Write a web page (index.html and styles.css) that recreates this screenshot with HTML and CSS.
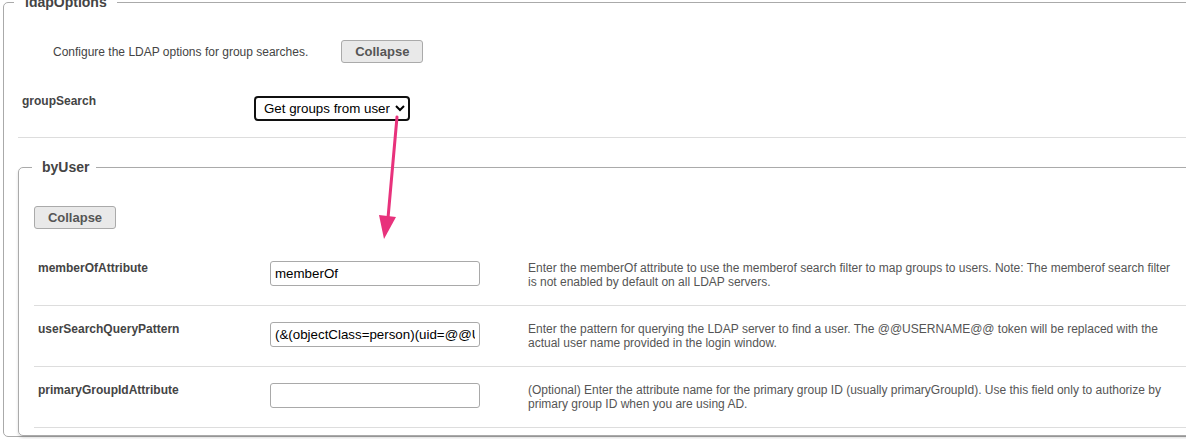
FILE: index.html
```html
<!DOCTYPE html>
<html>
<head>
<meta charset="utf-8">
<title>ldapOptions</title>
<link rel="stylesheet" href="styles.css">
</head>
<body>
<fieldset class="panel panel-outer">
  <legend class="panel-title panel-title-outer">ldapOptions</legend>
  <div class="intro">
    <span class="intro-text">Configure the LDAP options for group searches.</span>
    <button class="btn" type="button">Collapse</button>
  </div>
  <div class="field-row">
    <div class="field-label">groupSearch</div>
    <div class="field-control">
      <select class="select">
        <option>Get groups from user</option>
      </select>
    </div>
  </div>
  <fieldset class="panel panel-inner">
    <legend class="panel-title panel-title-inner">byUser</legend>
    <div class="toolbar"><button class="btn" type="button">Collapse</button></div>
    <div class="prop-row">
      <div class="prop-label">memberOfAttribute</div>
      <div class="prop-control"><input class="text-input" type="text" value="memberOf"></div>
      <div class="prop-desc">Enter the memberOf attribute to use the memberof search filter to map groups to users. Note: The memberof search filter is not enabled by default on all LDAP servers.</div>
    </div>
    <div class="prop-row">
      <div class="prop-label">userSearchQueryPattern</div>
      <div class="prop-control"><input class="text-input" type="text" value="(&amp;(objectClass=person)(uid=@@USERNAME@@))"></div>
      <div class="prop-desc">Enter the pattern for querying the LDAP server to find a user. The @@USERNAME@@ token will be replaced with the actual user name provided in the login window.</div>
    </div>
    <div class="prop-row">
      <div class="prop-label">primaryGroupIdAttribute</div>
      <div class="prop-control"><input class="text-input" type="text" value=""></div>
      <div class="prop-desc">(Optional) Enter the attribute name for the primary group ID (usually primaryGroupId). Use this field only to authorize by primary group ID when you are using AD.</div>
    </div>
  </fieldset>
</fieldset>
<svg class="annotation" width="1186" height="439" viewBox="0 0 1186 439">
  <line x1="397" y1="117" x2="388" y2="218" stroke="#e8327c" stroke-width="3" stroke-linecap="round"/>
  <polygon points="379,215 396,217 384,239" fill="#e8327c"/>
</svg>
</body>
</html>
```

FILE: styles.css
```css
html, body {
  margin: 0;
  padding: 0;
  background: #fff;
  overflow: hidden;
}

body {
  position: relative;
  width: 1186px;
  height: 439px;
  font-family: "Liberation Sans", Arial, sans-serif;
  color: #444;
}

.panel {
  border: 1px solid #aaa;
  border-radius: 5px;
  min-width: 0;
  box-sizing: border-box;
}

.panel-outer {
  margin: -6px 0 0 3px;
  width: 1260px;
  padding: 0 0 0 14px;
}

.panel-inner {
  margin: 21px 0 0 0;
  padding: 0 0 7px 15px;
  box-shadow: 0 2px 3px rgba(0, 0, 0, 0.14);
}

.panel-title {
  font-size: 14px;
  font-weight: bold;
  line-height: 16px;
  color: #444;
  padding: 0 10px;
}

.panel-title-outer {
  margin-left: -4px;
  padding: 0 10px 0 11px;
}

.panel-title-inner {
  margin-left: -2px;
  padding: 0 7px 0 10px;
}

.intro {
  display: flex;
  align-items: center;
  gap: 33px;
  padding: 30px 0 0 35px;
  font-size: 12px;
  line-height: 14px;
  color: #444;
}

.btn {
  width: 82px;
  height: 23px;
  box-sizing: border-box;
  padding: 0;
  border: 1px solid #aaa;
  border-radius: 3px;
  background: #e9e9e9;
  color: #555;
  font-family: "Liberation Sans", Arial, sans-serif;
  font-size: 13px;
  font-weight: bold;
  line-height: 21px;
}

.field-row {
  display: grid;
  grid-template-columns: 236px auto;
  padding: 31px 0 16px 0;
  border-bottom: 1px solid #ddd;
}

.field-label,
.prop-label {
  padding-left: 4px;
  font-size: 12px;
  line-height: 14px;
  font-weight: bold;
  color: #444;
}

.field-control {
  padding-top: 2px;
}

.select {
  width: 156px;
  height: 25px;
  box-sizing: border-box;
  border: 2px solid #101010;
  border-radius: 4px;
  background: #fff;
  color: #000;
  padding: 0 2px 0 4px;
  font-family: "Liberation Sans", Arial, sans-serif;
  font-size: 13.33px;
}

.toolbar {
  padding: 31px 0 16px 0;
}

.prop-row {
  display: grid;
  grid-template-columns: 236px 258px 652px;
  padding: 16px 0;
  border-bottom: 1px solid #ddd;
}

.text-input {
  display: block;
  width: 210px;
  height: 25px;
  box-sizing: border-box;
  margin: 0;
  padding: 0 4px;
  border: 1px solid #a9a9a9;
  border-radius: 3px;
  background: #fff;
  color: #000;
  font-family: "Liberation Sans", Arial, sans-serif;
  font-size: 13.33px;
}

.prop-desc {
  font-size: 12px;
  line-height: 14px;
  color: #555;
}

.annotation {
  position: absolute;
  left: 0;
  top: 0;
  pointer-events: none;
}
```
